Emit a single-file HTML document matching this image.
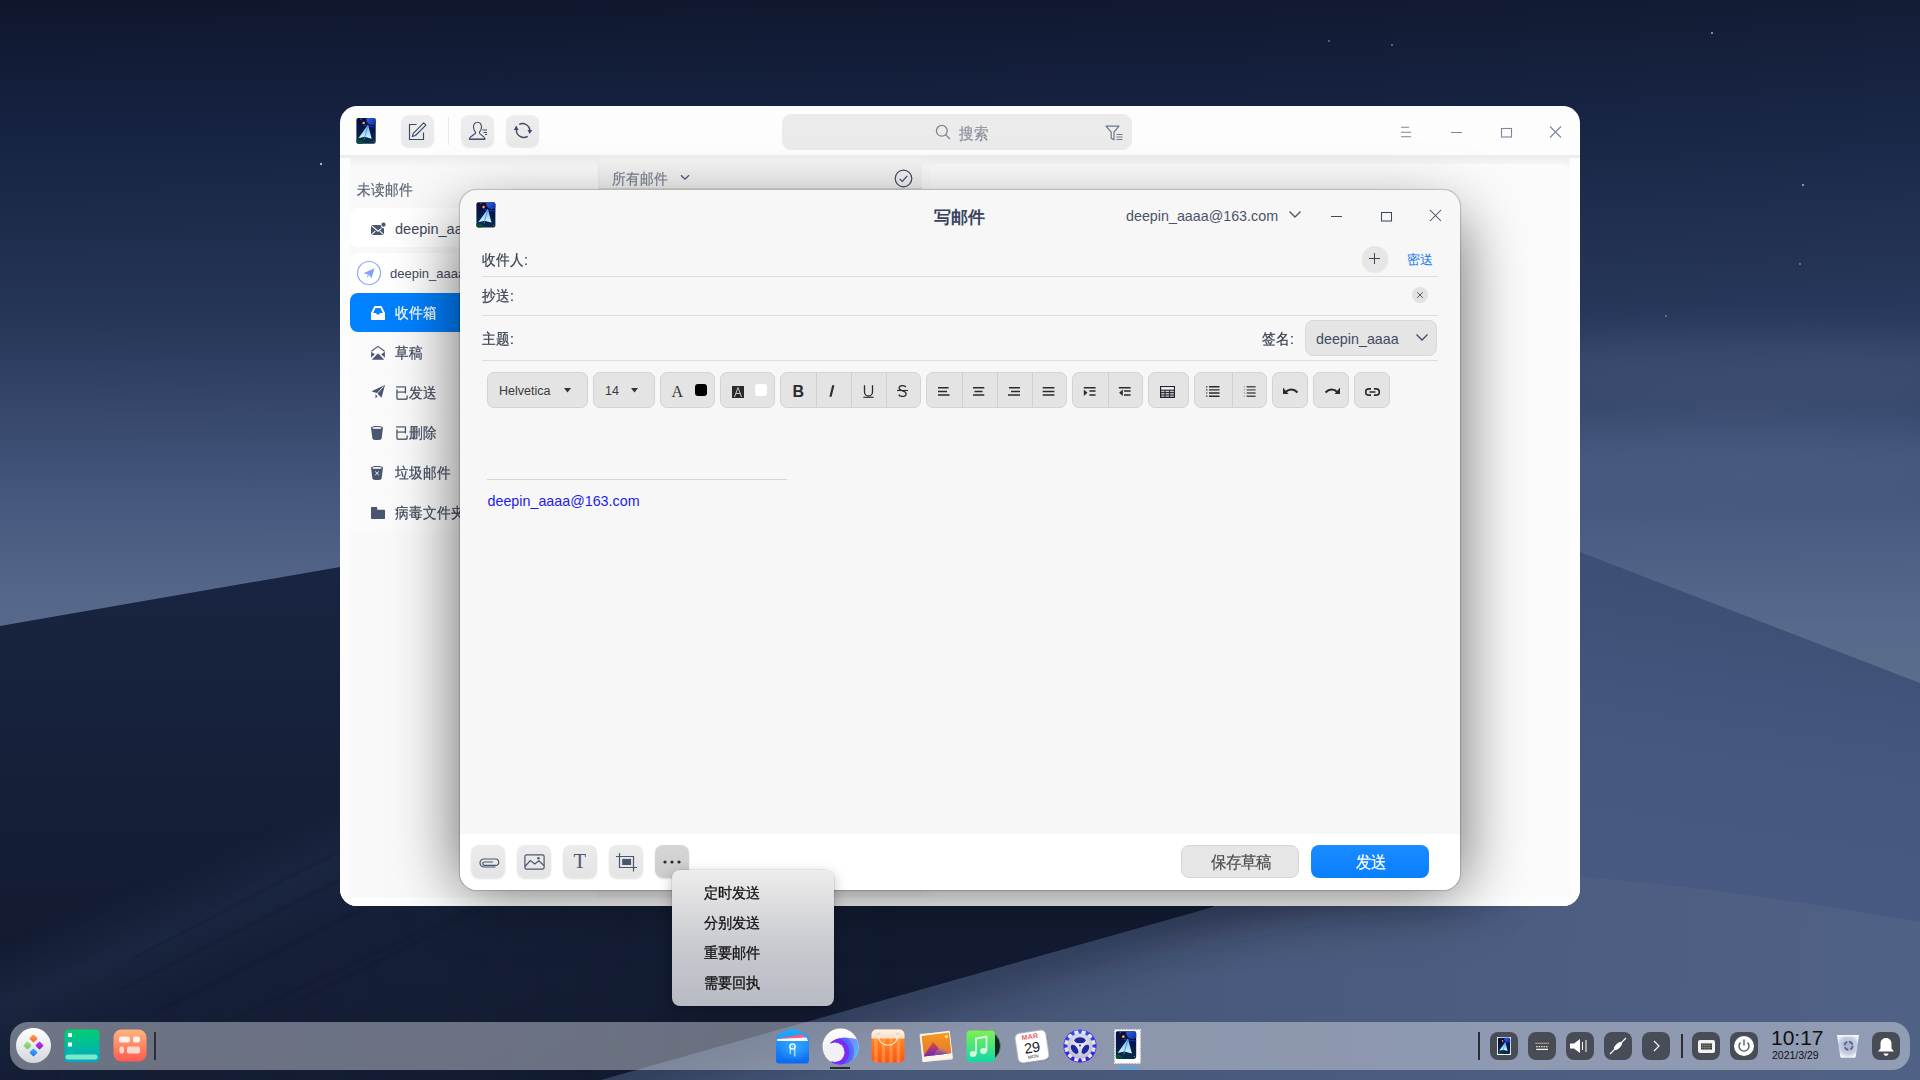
<!DOCTYPE html>
<html><head><meta charset="utf-8">
<style>
*{box-sizing:border-box;margin:0;padding:0}
html,body{width:1920px;height:1080px;overflow:hidden}
body{position:relative;font-family:"Liberation Sans",sans-serif;background:#1a2540}
.abs{position:absolute}
.c{transform:scaleY(1.1);transform-origin:0 0;-webkit-text-stroke:0.2px currentColor}
#bg{position:absolute;left:0;top:0}
/* main window */
#main{position:absolute;left:340px;top:106px;width:1240px;height:800px;border-radius:17px;background:#fdfdfd;overflow:hidden}
.tbtn{position:absolute;top:9.3px;width:33.3px;height:31.3px;border-radius:8px;background:linear-gradient(#eeeeee,#e8e8e8);box-shadow:0 1px 1.5px rgba(0,0,0,0.08)}
.ico{position:absolute}
/* compose */
#compose{position:absolute;left:460px;top:190px;width:1000px;height:700px;border-radius:17px;background:#f7f7f7;overflow:hidden;box-shadow:0 0 1px 0.5px rgba(0,0,0,0.18)}
.lbl{position:absolute;font-size:14px;color:#353e4e}
.sep{position:absolute;height:1px;background:#dedede}
.tb{position:absolute;top:182px;height:36px;border-radius:7px;background:#e4e4e4;border:1px solid #d3d3d3}
.tb .d{position:absolute;top:0;width:1px;height:34px;background:#d0d0d0}
.bb{position:absolute;top:655px;width:34px;height:33px;border-radius:8px;background:linear-gradient(#ececec,#e4e4e4);box-shadow:0 1px 2px rgba(0,0,0,0.12)}
#popup{position:absolute;left:672px;top:870px;width:162px;height:136px;border-radius:8px;background:linear-gradient(#ededed,#c9cacf 55%,#b8bac4);box-shadow:0 4px 14px rgba(0,0,0,0.25), 0 0 0 0.6px rgba(0,0,0,0.12)}
#popup div{position:absolute;left:32px;font-size:14px;color:#111;-webkit-text-stroke:0.3px #111;transform:scaleY(1.06);transform-origin:0 0}
/* dock */
#dock{position:absolute;left:10px;top:1022px;width:1900px;height:48px;border-radius:18px;background:rgba(248,250,255,0.39)}
.tray{position:absolute;top:10px;width:28px;height:28px;border-radius:8px;background:#474c57}
</style></head><body>
<svg width="0" height="0" style="position:absolute">
<defs>
<linearGradient id="mg" x1="0" y1="0" x2="0" y2="1"><stop offset="0" stop-color="#0c0c3e"/><stop offset="0.5" stop-color="#041a48"/><stop offset="1" stop-color="#06304a"/></linearGradient>
<linearGradient id="pl" x1="0" y1="0" x2="0" y2="1"><stop offset="0" stop-color="#6ab4f0"/><stop offset="1" stop-color="#d6f4ff"/></linearGradient>
<linearGradient id="pln" x1="0" y1="0" x2="1" y2="1"><stop offset="0" stop-color="#3a6ae0"/><stop offset="1" stop-color="#0a2aa0"/></linearGradient>
<clipPath id="icl"><rect x="1.4" y="1" width="19.3" height="25.7" rx="2"/></clipPath>
<symbol id="appicon" viewBox="0 0 22 28">
  <rect x="0" y="0" width="22" height="28" rx="3" fill="#fff"/>
  <rect x="1.4" y="1" width="19.3" height="25.7" rx="2" fill="url(#mg)"/>
  <g clip-path="url(#icl)">
    <circle cx="17" cy="2.5" r="5.6" fill="url(#pln)"/>
    <path d="M9 8.5C13 9 17 9.8 22 10.2" stroke="#1838d8" stroke-width="0.9" fill="none"/>
    <path d="M6.5 1L5.5 3" stroke="#10a0a0" stroke-width="0.8"/>
    <ellipse cx="4" cy="25" rx="4" ry="2.5" fill="#0a4a3a"/>
  </g>
  <circle cx="8.7" cy="6" r="1.3" fill="#ffa030"/>
  <circle cx="19" cy="24.5" r="0.5" fill="#e08030"/>
  <polygon points="13,7.7 3.4,21.3 9.5,19.8 16.7,21.7" fill="url(#pl)"/>
  <path d="M13 8.5L9 22.7" stroke="#3a90d0" stroke-width="0.8"/>
</symbol>
</defs></svg>
<svg id="bg" width="1920" height="1080" viewBox="0 0 1920 1080">
<defs>
<linearGradient id="sky" x1="0" y1="0" x2="0" y2="1080" gradientUnits="userSpaceOnUse">
<stop offset="0" stop-color="#0f172d"/><stop offset="0.111" stop-color="#152140"/><stop offset="0.296" stop-color="#263657"/><stop offset="0.444" stop-color="#42547a"/><stop offset="0.555" stop-color="#55688a"/><stop offset="0.65" stop-color="#5b6e8d"/>
</linearGradient>
<linearGradient id="dl" x1="0" y1="500" x2="0" y2="1080" gradientUnits="userSpaceOnUse">
<stop offset="0" stop-color="#1a2643"/><stop offset="0.5" stop-color="#151f38"/><stop offset="1" stop-color="#10182c"/>
</linearGradient>
<linearGradient id="dr" x1="1650" y1="560" x2="1600" y2="900" gradientUnits="userSpaceOnUse">
<stop offset="0" stop-color="#3d4e74"/><stop offset="0.5" stop-color="#45577f"/><stop offset="1" stop-color="#485a82"/>
</linearGradient>
<linearGradient id="fg" x1="800" y1="950" x2="1900" y2="1000" gradientUnits="userSpaceOnUse">
<stop offset="0" stop-color="#455575"/><stop offset="1" stop-color="#506186"/>
</linearGradient>
<filter id="soft" x="-5%" y="-5%" width="110%" height="110%"><feGaussianBlur stdDeviation="2"/></filter>
<filter id="soft2" x="-10%" y="-10%" width="120%" height="120%"><feGaussianBlur stdDeviation="14"/></filter>
</defs>
<rect width="1920" height="1080" fill="url(#sky)"/>
<defs><linearGradient id="skyh" x1="0" y1="0" x2="1920" y2="0" gradientUnits="userSpaceOnUse"><stop offset="0" stop-color="#3a5080" stop-opacity="0"/><stop offset="0.6" stop-color="#3a5080" stop-opacity="0.03"/><stop offset="1" stop-color="#4a6090" stop-opacity="0.08"/></linearGradient></defs>
<rect width="1920" height="620" fill="url(#skyh)"/>
<defs><filter id="cl" x="-50%" y="-50%" width="200%" height="200%"><feGaussianBlur stdDeviation="18"/></filter></defs>
<g filter="url(#cl)" opacity="0.13"><ellipse cx="1760" cy="365" rx="280" ry="34" fill="#7a8cb0"/><ellipse cx="1720" cy="455" rx="260" ry="34" fill="#8090b0"/></g>
<g fill="#cfd6e6" opacity="0.8"><circle cx="1712" cy="33" r="1"/><circle cx="1803" cy="185" r="1"/><circle cx="1800" cy="264" r="0.8"/><circle cx="1666" cy="316" r="0.8"/><circle cx="321" cy="164" r="1.2"/><circle cx="1329" cy="41" r="0.8"/><circle cx="1392" cy="45" r="0.8"/></g>
<g>
<polygon points="0,626 1222,414 1920,683 1920,1100 0,1100" fill="url(#dr)"/>
<polygon points="-20,629.5 1222,414 1300,870 760,1100 -20,1100" fill="url(#dl)"/>
<defs><linearGradient id="st" x1="170" y1="871" x2="215" y2="975" gradientUnits="userSpaceOnUse"><stop offset="0" stop-color="#2a3758" stop-opacity="0"/><stop offset="0.5" stop-color="#2a3758" stop-opacity="0.4"/><stop offset="1" stop-color="#1e2a48" stop-opacity="0.35"/></linearGradient>
<linearGradient id="stm" x1="0" y1="0" x2="900" y2="0" gradientUnits="userSpaceOnUse"><stop offset="0" stop-color="#fff"/><stop offset="0.5" stop-color="#fff" stop-opacity="0.7"/><stop offset="1" stop-color="#fff" stop-opacity="0"/></linearGradient>
<mask id="stmask" maskUnits="userSpaceOnUse" x="0" y="0" width="1920" height="1080"><rect width="1920" height="1080" fill="url(#stm)"/></mask>
<filter id="bl3"><feGaussianBlur stdDeviation="3"/></filter></defs>
<polygon points="-20,945 360,780 760,640 1300,600 1300,1080 -20,1080" fill="url(#st)" mask="url(#stmask)"/>
<g stroke="#0e1528" stroke-width="4" opacity="0.16">
<path d="M120,990 L420,840"/><path d="M160,1010 L520,830"/><path d="M230,1020 L600,850"/><path d="M130,960 L380,830"/><path d="M300,1000 L700,800"/>
</g>
<path d="M580,1086 L1217,906 C1300,880 1450,868 1580,877 C1700,886 1820,905 1940,925 L1940,1100 L580,1100 Z" fill="url(#fg)"/>
<defs><linearGradient id="fgs" x1="1000" y1="967" x2="1030" y2="1075" gradientUnits="userSpaceOnUse"><stop offset="0" stop-color="#18213a" stop-opacity="0.55"/><stop offset="1" stop-color="#18213a" stop-opacity="0"/></linearGradient>
<linearGradient id="fgs2" x1="1260" y1="880" x2="1290" y2="990" gradientUnits="userSpaceOnUse"><stop offset="0" stop-color="#18213a" stop-opacity="0.4"/><stop offset="1" stop-color="#18213a" stop-opacity="0"/></linearGradient></defs>
<clipPath id="fgclip"><path d="M580,1086 L1217,906 C1300,880 1450,868 1580,877 C1700,886 1820,905 1940,925 L1940,1100 L580,1100 Z"/></clipPath>
<filter id="bl20" x="-20%" y="-50%" width="140%" height="200%"><feGaussianBlur stdDeviation="22"/></filter>
<g clip-path="url(#fgclip)"><path d="M560,1092 L1217,906 C1300,880 1400,870 1500,872" stroke="#151d35" stroke-width="40" fill="none" opacity="0.55" filter="url(#bl20)"/></g>
</g>
</svg>

<div id="main">
  <!-- titlebar -->
  <svg class="ico" style="left:15.2px;top:10.5px" width="22" height="28" viewBox="0 0 22 28"><use href="#appicon"/></svg>
  <div class="tbtn" style="left:61px"></div>
  <svg class="ico" style="left:68px;top:16px" width="20" height="20" viewBox="0 0 20 20" fill="none" stroke="#3c4a68" stroke-width="1.15">
    <path d="M8.5 2.5H1.5V17.5H15.5V10.5"/><path d="M4.3 14.5L5.3 11.3 15.7 0.9 17.9 3.1 7.5 13.5Z" stroke-linejoin="round"/>
  </svg>
  <div class="abs" style="left:108px;top:11px;width:1px;height:28px;background:#e9e9ee"></div>
  <div class="tbtn" style="left:121px"></div>
  <svg class="ico" style="left:128px;top:15px" width="21" height="20" viewBox="0 0 21 20" fill="none" stroke="#3c4a68" stroke-width="1.1">
    <path d="M9.5 1.2C6.9 1.2 5.5 3.3 5.5 6C5.5 8 6.3 9.8 7.5 11V12.3L2.3 16.2C1.6 16.8 1.3 17.5 1.3 18.3H17C17 17.5 16.7 16.8 16 16.2L11.5 12.3V11C12.7 9.8 13.5 8 13.5 6C13.5 3.3 12.1 1.2 9.5 1.2Z"/>
    <path d="M1.3 18.3H17" stroke-width="1.6" opacity="0.8"/>
    <path d="M14.5 9H19M15.5 11.5H19M17 13.5H19" stroke-width="1"/>
  </svg>
  <div class="tbtn" style="left:166px"></div>
  <svg class="ico" style="left:172px;top:14px" width="22" height="22" viewBox="0 0 22 22" fill="none" stroke="#3c4a68" stroke-width="1.4">
    <path d="M7.2 4.4A7.4 7.4 0 0 1 17.9 10.2"/><path d="M15.7 16.3A7.4 7.4 0 0 1 4.4 9.6"/>
    <path d="M15.5 9.9L20.2 9.9 17.7 14Z" fill="#3c4a68" stroke="none"/><path d="M1.8 10L6.6 10 4.3 5.6Z" fill="#3c4a68" stroke="none"/>
  </svg>
  <!-- search -->
  <div class="abs" style="left:442px;top:8px;width:350px;height:36px;border-radius:9px;background:#ebebeb"></div>
  <svg class="ico" style="left:595px;top:18px" width="17" height="17" viewBox="0 0 17 17" fill="none" stroke="#7d8594" stroke-width="1.3">
    <circle cx="6.8" cy="6.8" r="5.4"/><path d="M10.7 10.7L15 15"/>
  </svg>
  <div class="abs c" style="left:619px;top:17.5px;font-size:14.5px;color:#8b919c">搜索</div>
  <svg class="ico" style="left:765px;top:19px" width="20" height="17" viewBox="0 0 20 17" fill="none" stroke="#6e7789" stroke-width="1.2">
    <path d="M1 1.2h13l-5 6v7.5l-2.8-1.5V7.2z" stroke-linejoin="round"/><path d="M11.5 9.5h6M11.5 12h6M11.5 14.5h6"/>
  </svg>
  <!-- window controls -->
  <svg class="ico" style="left:1058px;top:17px" width="180" height="18" viewBox="0 0 180 18" fill="none" stroke="#7c879c" stroke-width="1.1">
    <path d="M3 4.3h8M3 9.3h10M3 13.8h10"/>
    <path d="M53 9.5h11"/>
    <rect x="103.5" y="5.5" width="10" height="8.5"/>
    <path d="M152 3.5l11 11M163 3.5l-11 11"/>
  </svg>
  <!-- below titlebar -->
  <div class="abs" style="left:0;top:49px;width:1240px;height:3px;background:#eeeeee"></div>
  <div class="abs" style="left:0;top:52px;width:1240px;height:748px;background:#f9f9f9"></div>
  <div class="abs" style="left:0;top:52px;width:1240px;height:8px;background:linear-gradient(#f0f0f0,#f7f7f7)"></div>
  <!-- sidebar -->
  <div class="abs" style="left:0;top:52px;width:10px;height:748px;background:#fdfdfd"></div>
  <div class="abs" style="left:0;top:791px;width:1240px;height:9px;background:#fdfdfd"></div>
  <div class="abs" style="left:1230px;top:52px;width:10px;height:748px;background:#fdfdfd"></div>
  <div class="abs" style="left:10px;top:62px;width:238px;height:364px;background:#f9f9f9"></div>
  <div class="abs c" style="left:17px;top:74.7px;font-size:14px;color:#5b6474">未读邮件</div>
  <div class="abs" style="left:10px;top:102px;width:238px;height:39px;border-radius:8px;background:#fff"></div>
  <svg class="ico" style="left:30px;top:116px" width="16" height="13" viewBox="0 0 16 13">
    <path d="M1 3.5c0-.3.2-.5.5-.5h9.2a3 3 0 0 0 3.3 3.2V12.5c0 .3-.2.5-.5.5H1.5c-.3 0-.5-.2-.5-.5z" fill="#4a5570"/>
    <path d="M1.2 3.3L8 9.2 11.5 6.3M1.2 12.8L5.3 9.2M13.8 12.8L9.8 9.2" stroke="#fff" stroke-width="1.1" fill="none"/>
    <circle cx="13.5" cy="2.7" r="2.1" fill="#4a5570"/>
  </svg>
  <div class="abs" style="left:55px;top:115px;font-size:14.5px;color:#3f4a5e">deepin_aaaa@163.com</div>
  <div class="abs" style="left:10px;top:147px;width:238px;height:40px;border-radius:8px;background:#fff"></div>
  <svg class="ico" style="left:16px;top:154px" width="26" height="26" viewBox="0 0 26 26">
    <circle cx="13" cy="13" r="11.5" fill="none" stroke="#8aaaf4" stroke-width="1.2"/>
    <path d="M7.5 13.2L18.5 8.2 15.5 18.3 13 14.8z" fill="#7fa2f0"/><path d="M13 14.8l-1.3 3.3 -0.6-2.6z" fill="#7fa2f0"/>
  </svg>
  <div class="abs" style="left:50px;top:160px;font-size:13px;color:#3f4a5e">deepin_aaaa@163.com</div>
  <!-- selected -->
  <div class="abs" style="left:10px;top:187px;width:238px;height:39px;border-radius:8px;background:#0081ff"></div>
  <svg class="ico" style="left:31px;top:200px" width="14" height="14" viewBox="0 0 14 14">
    <path d="M3.5 0h7l3.5 7v6.5c0 .3-.2.5-.5.5H.5c-.3 0-.5-.2-.5-.5V7z" fill="#fff"/>
    <path d="M4.5 2h5l2.3 5H8.8a1.8 1.8 0 0 1-3.6 0H2.2z" fill="#0081ff"/>
  </svg>
  <div class="abs c" style="left:55px;top:197.7px;font-size:14px;color:#fff">收件箱</div>
  <div class="abs" style="left:10px;top:228px;width:238px;height:38px;border-radius:8px;background:#fbfbfb"></div>
  <svg class="ico" style="left:28px;top:236px" width="20" height="20" viewBox="0 0 20 20" fill="#4a5570">
    <path d="M3.4 9.3L10 4.4 16.6 9.3" stroke="#4a5570" stroke-width="1.15" fill="none" stroke-linejoin="round"/>
    <path d="M3.1 9.7V15.8L6.8 12.3Z"/><path d="M16.9 9.7V15.8L13.2 12.3Z"/><path d="M3.8 17.7L10 11.2 16.2 17.7Z"/>
  </svg>
  <div class="abs c" style="left:55px;top:237.7px;font-size:14px;color:#3f4a5e">草稿</div>
  <div class="abs" style="left:10px;top:267px;width:238px;height:39px;border-radius:8px;background:#fbfbfb"></div>
  <svg class="ico" style="left:31px;top:279px" width="14" height="14" viewBox="0 0 14 14">
    <path d="M0.5 6.3L14 0 10.5 12.8 6.2 8.3z" fill="#4a5570"/>
    <path d="M4.5 9.2V13.5L6.5 11.3z" fill="#4a5570"/>
    <path d="M5.8 8.6L12.5 1.5" stroke="#fff" stroke-width="0.9"/>
  </svg>
  <div class="abs c" style="left:55px;top:277.7px;font-size:14px;color:#3f4a5e">已发送</div>
  <div class="abs" style="left:10px;top:307px;width:238px;height:39px;border-radius:8px;background:#fbfbfb"></div>
  <svg class="ico" style="left:31px;top:320px" width="12" height="14" viewBox="0 0 12 14">
    <path d="M0 1.8C0 .6 3 0 6 0s6 .6 6 1.8L10.6 12.5c-.2 1-2.2 1.5-4.6 1.5s-4.4-.5-4.6-1.5z" fill="#4a5570"/>
    <ellipse cx="6" cy="1.9" rx="4.6" ry="0.9" fill="#fff"/>
  </svg>
  <div class="abs c" style="left:55px;top:317.7px;font-size:14px;color:#3f4a5e">已删除</div>
  <div class="abs" style="left:10px;top:347px;width:238px;height:39px;border-radius:8px;background:#fbfbfb"></div>
  <svg class="ico" style="left:31px;top:360px" width="12" height="14" viewBox="0 0 12 14">
    <path d="M0 1.8C0 .6 3 0 6 0s6 .6 6 1.8L10.6 12.5c-.2 1-2.2 1.5-4.6 1.5s-4.4-.5-4.6-1.5z" fill="#4a5570"/>
    <ellipse cx="6" cy="1.9" rx="4.6" ry="0.9" fill="#fff"/>
    <path d="M4.2 5.5l3.6 3.6M7.8 5.5l-3.6 3.6" stroke="#fff" stroke-width="0.9"/>
  </svg>
  <div class="abs c" style="left:55px;top:357.7px;font-size:14px;color:#3f4a5e">垃圾邮件</div>
  <div class="abs" style="left:10px;top:387px;width:238px;height:39px;border-radius:8px;background:#fbfbfb"></div>
  <svg class="ico" style="left:31px;top:401px" width="14" height="12" viewBox="0 0 14 12">
    <path d="M0 .8C0 .3.3 0 .8 0h4.7c.4 0 .7.3.7.7v1.5c0 .3.2.5.5.5h6.5c.5 0 .8.3.8.8v7.7c0 .5-.3.8-.8.8H.8c-.5 0-.8-.3-.8-.8z" fill="#4a5570"/>
  </svg>
  <div class="abs c" style="left:55px;top:397.7px;font-size:14px;color:#3f4a5e">病毒文件夹</div>
  <!-- list column header -->
  <div class="abs" style="left:258px;top:52px;width:324px;height:740px;background:#f6f6f6;border-left:1px solid #ececec"></div>
  <div class="abs" style="left:258px;top:52px;width:324px;height:31px;background:linear-gradient(#f4f4f4,#efefef);border-bottom:1px solid #d8d8d8;border-left:1px solid #ececec"></div>
  <div class="abs c" style="left:271.5px;top:63.5px;font-size:14px;color:#7b8290">所有邮件</div>
  <svg class="ico" style="left:340px;top:68px" width="10" height="7" viewBox="0 0 10 7" fill="none" stroke="#4a5570" stroke-width="1.3"><path d="M1 1.2l4 4 4-4"/></svg>
  <svg class="ico" style="left:554px;top:63px" width="19" height="19" viewBox="0 0 19 19" fill="none" stroke="#3f4a66" stroke-width="1.2">
    <circle cx="9.5" cy="9.5" r="8.3"/><path d="M5.6 9.8l2.7 2.7 5-5.6"/>
  </svg>
  <!-- reading pane -->
  <div class="abs" style="left:590px;top:58px;width:640px;height:733px;border-radius:9px;background:#fbfbfb"></div>
</div>

<div class="abs" style="left:462px;top:220px;width:996px;height:668px;border-radius:20px;box-shadow:0 0 64px 4px rgba(0,0,0,0.58)"></div>
<div id="compose">
  <svg class="ico" style="left:15.3px;top:11px" width="21.7" height="28" viewBox="0 0 22 28"><use href="#appicon"/></svg>
  <div class="abs" style="left:474px;top:15.5px;font-size:17px;font-weight:bold;color:#38445e">写邮件</div>
  <div class="abs" style="left:666px;top:18px;font-size:14.3px;color:#4a5468">deepin_aaaa@163.com</div>
  <svg class="ico" style="left:828px;top:20px" width="14" height="9" viewBox="0 0 14 9" fill="none" stroke="#4a5468" stroke-width="1.3"><path d="M1.5 1.5l5.5 5.5 5.5-5.5"/></svg>
  <svg class="ico" style="left:868px;top:17px" width="120" height="16" viewBox="0 0 120 16" fill="none" stroke="#3f4a62" stroke-width="1.05">
    <path d="M3 9.5h11"/><rect x="53.5" y="5.5" width="10" height="8.5"/><path d="M102 3l11 11M113 3l-11 11"/>
  </svg>
  <!-- fields -->
  <div class="lbl c" style="left:22px;top:60.5px">收件人:</div>
  <div class="abs" style="left:902px;top:56px;width:26px;height:26px;border-radius:13px;background:#e6e6e6;box-shadow:0 1px 2px rgba(0,0,0,0.08)"></div>
  <svg class="ico" style="left:909px;top:63px" width="12" height="12" viewBox="0 0 12 12" stroke="#3c4658" stroke-width="1"><path d="M5.5 0v11M0 5.5h11"/></svg>
  <div class="abs" style="left:947px;top:61px;font-size:13px;color:#1478f2">密送</div>
  <div class="sep" style="left:22px;top:86px;width:956px"></div>
  <div class="lbl c" style="left:22px;top:97px">抄送:</div>
  <div class="abs" style="left:952px;top:97px;width:16px;height:16px;border-radius:8px;background:#e2e2e2"></div>
  <svg class="ico" style="left:956px;top:101px" width="8" height="8" viewBox="0 0 8 8" stroke="#4a5468" stroke-width="0.95"><path d="M1.2 1.2l5.6 5.6M6.8 1.2l-5.6 5.6"/></svg>
  <div class="sep" style="left:22px;top:125px;width:956px"></div>
  <div class="lbl c" style="left:22px;top:140px">主题:</div>
  <div class="lbl c" style="left:802px;top:139.5px">签名:</div>
  <div class="abs" style="left:845px;top:130px;width:132px;height:36px;border-radius:8px;background:#e5e5e5;border:1px solid #d9d9d9"></div>
  <div class="abs" style="left:856px;top:141px;font-size:14.3px;color:#3f4a62">deepin_aaaa</div>
  <svg class="ico" style="left:955px;top:143px" width="14" height="9" viewBox="0 0 14 9" fill="none" stroke="#3f4a62" stroke-width="1.3"><path d="M1.5 1.5l5.5 5.5 5.5-5.5"/></svg>
  <div class="sep" style="left:22px;top:170px;width:956px"></div>
  <!-- toolbar -->
  <div class="tb" style="left:27px;width:101px"></div>
  <div class="abs" style="left:39px;top:193.5px;font-size:12.5px;color:#3a3a3a">Helvetica</div>
  <svg class="ico" style="left:104px;top:198px" width="7" height="5" viewBox="0 0 7 5"><path d="M0 0h7L3.5 4.5z" fill="#333"/></svg>
  <div class="tb" style="left:133px;width:62px"></div>
  <div class="abs" style="left:145px;top:193.5px;font-size:12.5px;color:#3a3a3a">14</div>
  <svg class="ico" style="left:171px;top:198px" width="7" height="5" viewBox="0 0 7 5"><path d="M0 0h7L3.5 4.5z" fill="#333"/></svg>
  <div class="tb" style="left:200px;width:55px"></div>
  <div class="abs" style="left:211.5px;top:192.5px;font-size:16px;line-height:18px;font-family:'Liberation Serif',serif;color:#333">A</div>
  <div class="abs" style="left:235px;top:194px;width:12px;height:12px;border-radius:3px;background:#000"></div>
  <div class="tb" style="left:260px;width:55px"></div>
  <svg class="ico" style="left:271.5px;top:195.5px" width="12" height="12" viewBox="0 0 12 12"><rect width="12" height="12" fill="#2a2a2a"/><path d="M2.5 11L6 1.5 9.5 11M4 7.5h4" stroke="#d8d8d8" stroke-width="0.9" fill="none"/></svg>
  <div class="abs" style="left:295px;top:194px;width:12px;height:12px;border-radius:3px;background:#fff"></div>
  <div class="tb" style="left:320px;width:141px"><div class="d" style="left:35px"></div><div class="d" style="left:70px"></div><div class="d" style="left:105px"></div></div>
  <div class="abs" style="left:332.5px;top:192.5px;font-size:16px;line-height:18px;font-weight:bold;color:#2b2b2b">B</div>
  <svg class="ico" style="left:369px;top:195px" width="6" height="12" viewBox="0 0 6 12"><path d="M3.2 0.3h2.2L2.6 11.7H0.4z" fill="#2b2b2b"/></svg>
  <svg class="ico" style="left:402.5px;top:195px" width="11" height="13" viewBox="0 0 11 13" fill="none" stroke="#2b2b2b" stroke-width="1.3"><path d="M1.5 0.3V7a4 4 0 0 0 8 0V0.3"/><path d="M0.3 12.3H10.6" stroke-width="1.1"/></svg>
  <svg class="ico" style="left:437px;top:195px" width="11" height="12" viewBox="0 0 11 12" fill="none" stroke="#2b2b2b" stroke-width="1.3"><path d="M8.8 2.2C8 1 6.8 0.6 5.4 0.6 3.5 0.6 2.1 1.6 2.1 3.1c0 3.3 7 2.4 7 5.6 0 1.7-1.5 2.7-3.6 2.7-1.6 0-3-.6-3.8-1.8"/><path d="M0 5.5H11" stroke-width="1.1"/></svg>
  <div class="tb" style="left:466px;width:141px"><div class="d" style="left:35px"></div><div class="d" style="left:70px"></div><div class="d" style="left:105px"></div></div>
  <svg class="ico" style="left:477px;top:196px" width="130" height="11" viewBox="0 0 130 11" stroke="#2b2b2b" stroke-width="1.5">
    <path d="M1 1.8h10.6M1 5.5h9M1 9h11.5"/>
    <path d="M36 1.8h11.3M37.5 5.5h8M36 9h11.3"/>
    <path d="M72 1.8h11M74 5.5h9M71 9h12"/>
    <path d="M105.7 1.8h11.7M105.7 5.5h11.7M105.7 9h11.7"/>
  </svg>
  <div class="tb" style="left:612px;width:71px"><div class="d" style="left:35px"></div></div>
  <svg class="ico" style="left:623px;top:196px" width="60" height="12" viewBox="0 0 60 12" stroke="#2b2b2b" stroke-width="1.5">
    <path d="M0.8 1.7h11.8M6.4 5.1h6.2M6.4 8.9h6.2"/><path d="M0.8 3.5v6.5l3.7-3.2z" fill="#2b2b2b" stroke="none"/>
    <path d="M35.8 1.7h11.8M41 5.1h6.6M41 8.9h6.6"/><path d="M39.8 3.5v6.5l-3.7-3.2z" fill="#2b2b2b" stroke="none"/>
  </svg>
  <div class="tb" style="left:688px;width:41px"></div>
  <svg class="ico" style="left:699.5px;top:195.5px" width="15" height="12" viewBox="0 0 15 12">
    <rect x="0.6" y="0.6" width="13.8" height="10.8" fill="#c8c8c8" stroke="#202030" stroke-width="1.2"/>
    <rect x="1.2" y="1.2" width="12.6" height="2.3" fill="#f4f4f4"/>
    <path d="M1 4.2h13M1 6.6h13M1 9h13" stroke="#202030" stroke-width="1"/><path d="M5 4v7M9.6 4v7" stroke="#202030" stroke-width="1"/>
  </svg>
  <div class="tb" style="left:734px;width:73px"><div class="d" style="left:37px"></div></div>
  <svg class="ico" style="left:745.5px;top:195.5px" width="60" height="12" viewBox="0 0 60 12" stroke="#2b2b2b">
    <path d="M3 0.8h10.5M3 3.9h10.5M3 7h10.5M3 10.2h10.5" stroke-width="1.4"/><path d="M0 0.8h1.4M0 3.9h1.4M0 7h1.4M0 10.2h1.4" stroke-width="1.2"/>
    <path d="M40.6 0.8h9M40.6 3.9h9M40.6 7h9M40.6 10.2h9" stroke-width="1.4" stroke="#505050"/><path d="M37.8 0.8h1M37.8 3.9h1M37.8 7h1M37.8 10.2h1" stroke-width="1" stroke="#777"/>
  </svg>
  <div class="tb" style="left:812px;width:36px"></div>
  <svg class="ico" style="left:823px;top:197px" width="15" height="8" viewBox="0 0 15 8"><path d="M0 0.5v6.5h5.5z" fill="#2b2b2b"/><path d="M2.5 5.2c3.3-3.6 8.5-3.8 12 .3" stroke="#2b2b2b" stroke-width="2" fill="none"/></svg>
  <div class="tb" style="left:853px;width:36px"></div>
  <svg class="ico" style="left:864.5px;top:197px" width="15" height="8" viewBox="0 0 15 8"><path d="M15 0.5v6.5H9.5z" fill="#2b2b2b"/><path d="M12.5 5.2c-3.3-3.6-8.5-3.8-12 .3" stroke="#2b2b2b" stroke-width="2" fill="none"/></svg>
  <div class="tb" style="left:894px;width:36px"></div>
  <svg class="ico" style="left:905px;top:197.5px" width="15" height="8" viewBox="0 0 15 8" fill="none" stroke="#2b2b2b" stroke-width="1.6">
    <path d="M6 0.9H3.8a3.1 3.1 0 0 0 0 6.2H6M9 0.9h2.2a3.1 3.1 0 0 1 0 6.2H9M4.5 4h6"/>
  </svg>
  <!-- body -->
  <div class="abs" style="left:27px;top:289px;width:300px;height:1px;background:#d6d6d6"></div>
  <div class="abs" style="left:27.5px;top:303px;font-size:14.3px;color:#1c1ce8">deepin_aaaa@163.com</div>
  <!-- bottom bar -->
  <div class="abs" style="left:0;top:644px;width:1000px;height:56px;background:#fff"></div>
  <div class="bb" style="left:11px"></div>
  <div class="bb" style="left:57px"></div>
  <div class="bb" style="left:103px"></div>
  <div class="bb" style="left:149px"></div>
  <div class="bb" style="left:195px;background:linear-gradient(#d6d6d6,#cccccc)"></div>
  <svg class="ico" style="left:18.5px;top:667.5px" width="22" height="11" viewBox="0 0 22 11" fill="none" stroke="#4a5670" stroke-width="1.2">
    <path d="M16.5 9H5A4 4 0 0 1 5 1H16.5A3.2 3.2 0 0 1 16.5 7.4H5.5A1.7 1.7 0 0 1 5.5 4H14"/>
  </svg>
  <svg class="ico" style="left:63.5px;top:663.5px" width="21" height="16" viewBox="0 0 21 16" fill="none" stroke="#4a5670" stroke-width="1.2">
    <rect x="0.9" y="0.9" width="19.2" height="14.2" rx="1.5"/><path d="M1 12.5L6.3 6.5 10.8 10 14.8 6.7 20 11.5"/><circle cx="14.5" cy="4.3" r="1.2" fill="#4a5670" stroke="none"/>
  </svg>
  <div class="abs" style="left:113.5px;top:659px;font-size:20.5px;line-height:24px;font-family:'Liberation Serif',serif;color:#4a5670">T</div>
  <svg class="ico" style="left:155.5px;top:662.5px" width="22" height="19" viewBox="0 0 22 19" fill="none" stroke="#4a5670" stroke-width="1.2">
    <path d="M3.5 0V14.5H21M0 3.5H17.5V18.5"/><rect x="6.2" y="5.9" width="8.9" height="6.1" fill="#4a5670" stroke="none"/>
  </svg>
  <svg class="ico" style="left:202px;top:670px" width="20" height="4" viewBox="0 0 20 4" fill="#222b3a"><circle cx="3" cy="2" r="1.6"/><circle cx="10" cy="2" r="1.6"/><circle cx="17" cy="2" r="1.6"/></svg>
  <div class="abs" style="left:721px;top:655px;width:118px;height:33px;border-radius:8px;background:#e6e6e6;border:1px solid #d5d5d5"></div>
  <div class="abs c" style="left:751px;top:663.2px;font-size:15px;color:#505050">保存草稿</div>
  <div class="abs" style="left:851px;top:655px;width:118px;height:33px;border-radius:8px;background:linear-gradient(#1a8cff,#0a7fff)"></div>
  <div class="abs c" style="left:896px;top:663.2px;font-size:15px;color:#fff">发送</div>
</div>

<div id="popup">
  <div style="top:14px">定时发送</div>
  <div style="top:44px">分别发送</div>
  <div style="top:74px">重要邮件</div>
  <div style="top:104px">需要回执</div>
</div>

<div id="dock">
  <!-- launcher -->
  <svg class="ico" style="left:5px;top:5px" width="37" height="37" viewBox="0 0 37 37">
    <defs><linearGradient id="lg1" x1="0" y1="0" x2="0" y2="1"><stop offset="0" stop-color="#ffffff"/><stop offset="1" stop-color="#d4d8dc"/></linearGradient>
    <linearGradient id="dg1" x1="0" y1="0" x2="1" y2="1"><stop offset="0" stop-color="#ffa24a"/><stop offset="1" stop-color="#ff5a3a"/></linearGradient>
    <linearGradient id="dg2" x1="0" y1="0" x2="1" y2="1"><stop offset="0" stop-color="#a8e070"/><stop offset="1" stop-color="#70c878"/></linearGradient>
    <linearGradient id="dg3" x1="0" y1="0" x2="1" y2="1"><stop offset="0" stop-color="#c040f0"/><stop offset="1" stop-color="#9010d0"/></linearGradient>
    <linearGradient id="dg4" x1="0" y1="0" x2="1" y2="1"><stop offset="0" stop-color="#40b0ff"/><stop offset="1" stop-color="#2070f0"/></linearGradient></defs>
    <circle cx="18.5" cy="18.5" r="17.5" fill="url(#lg1)"/>
    <rect x="15.5" y="8.5" width="6" height="6" rx="1" transform="rotate(45 18.5 11.5)" fill="url(#dg1)"/>
    <rect x="9.5" y="15.5" width="6" height="6" rx="1" transform="rotate(45 12.5 18.5)" fill="url(#dg2)"/>
    <rect x="21.5" y="15.5" width="6" height="6" rx="1" transform="rotate(45 24.5 18.5)" fill="url(#dg3)"/>
    <rect x="15.5" y="22.5" width="6" height="6" rx="1" transform="rotate(45 18.5 25.5)" fill="url(#dg4)"/>
  </svg>
  <!-- green app -->
  <svg class="ico" style="left:54px;top:7px" width="36" height="34" viewBox="0 0 36 34">
    <defs><linearGradient id="ga" x1="0" y1="0" x2="0" y2="1"><stop offset="0" stop-color="#00d070"/><stop offset="1" stop-color="#00a8c8"/></linearGradient></defs>
    <rect x="0.5" y="0.5" width="35" height="32.5" rx="4" fill="url(#ga)"/>
    <rect x="4" y="4" width="4" height="4" fill="#fff"/><rect x="4" y="13.5" width="4" height="4" fill="#fff"/>
    <rect x="1.5" y="25.5" width="32" height="5" rx="2.5" fill="#7ee8c8"/>
  </svg>
  <!-- orange app -->
  <svg class="ico" style="left:103px;top:7px" width="34" height="33" viewBox="0 0 34 33">
    <defs><linearGradient id="gb" x1="0" y1="0" x2="0" y2="1"><stop offset="0" stop-color="#ffb47a"/><stop offset="1" stop-color="#ff5a50"/></linearGradient></defs>
    <rect x="0.5" y="0.5" width="33" height="32" rx="8" fill="url(#gb)"/>
    <rect x="6" y="7.5" width="11" height="6" rx="2" fill="#fff" opacity="0.88"/><rect x="20" y="7.5" width="7" height="6" rx="2" fill="#fff" opacity="0.88"/>
    <rect x="6.5" y="17.5" width="4.5" height="7" rx="2" fill="#fff" opacity="0.7"/><rect x="14" y="17.5" width="13" height="7" rx="2" fill="#fff" opacity="0.7"/>
  </svg>
  <div class="abs" style="left:144px;top:10px;width:2px;height:28px;background:#2b2e36"></div>
  <!-- center icons -->
  <svg class="ico" style="left:764.5px;top:5.5px" width="35" height="36" viewBox="0 0 35 36">
    <defs><linearGradient id="gc" x1="0" y1="0" x2="0" y2="1"><stop offset="0" stop-color="#1ab0ff"/><stop offset="0.4" stop-color="#1e90ff"/><stop offset="1" stop-color="#0a68f0"/></linearGradient>
    <radialGradient id="gcr" cx="0.55" cy="0.45" r="0.5"><stop offset="0" stop-color="#40c0ff" stop-opacity="0.6"/><stop offset="1" stop-color="#40c0ff" stop-opacity="0"/></radialGradient></defs>
    <path d="M1 12C1 8 3 6.5 6 5L14 1.5C16.3.5 18.7.5 21 1.5L29 5C32 6.5 34 8 34 12V32.5C34 34.2 32.7 35.5 31 35.5H4C2.3 35.5 1 34.2 1 32.5Z" fill="url(#gc)"/>
    <rect x="1" y="8" width="33" height="27" fill="url(#gcr)"/>
    <path d="M2.5 10.5L28 6.2 30.5 10.2Z" fill="#ff5a78"/><path d="M2.2 11L31.5 9.6 33 13H2Z" fill="#fff"/>
    <circle cx="17.5" cy="18.5" r="2.6" fill="none" stroke="#fff" stroke-width="1.4"/><circle cx="17.5" cy="18.5" r="0.9" fill="#7fd8ff"/>
    <path d="M15.2 20.5v5.5M19.8 20.5v8" stroke="#fff" stroke-width="0.9"/>
  </svg>
  <svg class="ico" style="left:811.5px;top:5.5px" width="37" height="37" viewBox="0 0 37 37">
    <defs><linearGradient id="gw" x1="0" y1="0" x2="0" y2="1"><stop offset="0" stop-color="#fff"/><stop offset="1" stop-color="#e8e8ea"/></linearGradient>
    <linearGradient id="gd1" x1="0" y1="0" x2="1" y2="0.6"><stop offset="0" stop-color="#9a6cf4"/><stop offset="0.7" stop-color="#7a86f8"/><stop offset="1" stop-color="#48b8ff"/></linearGradient>
    <clipPath id="cc"><circle cx="18.5" cy="18.5" r="18"/></clipPath>
    <clipPath id="wv"><path d="M8.4 15C14 9.5 26 8 37 12V37H10Z"/></clipPath></defs>
    <circle cx="18.5" cy="18.5" r="18" fill="url(#gw)"/>
    <g clip-path="url(#cc)"><g clip-path="url(#wv)">
      <rect width="37" height="37" fill="url(#gd1)"/>
      <circle cx="12.7" cy="24.2" r="19.5" fill="#6a6cf8"/>
      <circle cx="12.7" cy="24.2" r="17.5" fill="#4a6aff"/>
      <circle cx="12.7" cy="24.2" r="14.5" fill="#7a2cf6"/>
    </g></g>
    <circle cx="12.7" cy="24.2" r="9.8" fill="#f1f1f3"/>
  </svg>
  <div class="abs" style="left:820px;top:45px;width:20px;height:2px;background:#2a2a2a"></div>
  <svg class="ico" style="left:861px;top:7px" width="34" height="34" viewBox="0 0 34 34">
    <defs><linearGradient id="ge" x1="0" y1="0" x2="0" y2="1"><stop offset="0" stop-color="#ff9a30"/><stop offset="1" stop-color="#ff5210"/></linearGradient>
    <linearGradient id="gtop" x1="0" y1="0" x2="0" y2="1"><stop offset="0" stop-color="#fdf6ee"/><stop offset="1" stop-color="#f8dcc0"/></linearGradient>
    <clipPath id="bagc"><rect x="0.5" y="0.5" width="33" height="33" rx="5"/></clipPath></defs>
    <g clip-path="url(#bagc)">
      <rect width="34" height="34" fill="url(#ge)"/>
      <path d="M5 9v25M12.5 9v25M20 9v25M27.5 9v25" stroke="#ffb870" stroke-width="3.4" opacity="0.45"/>
      <rect width="34" height="9.5" fill="url(#gtop)"/>
    </g>
    <circle cx="7.5" cy="5" r="1.1" fill="none" stroke="#d8c8b8" stroke-width="0.7"/><circle cx="26.5" cy="5" r="1.1" fill="none" stroke="#d8c8b8" stroke-width="0.7"/>
    <path d="M7.5 6.2c0 6.5 4 10 9.5 10s9.5-3.5 9.5-10" stroke="#fff2e4" stroke-width="1.1" fill="none"/>
  </svg>
  <svg class="ico" style="left:908px;top:6.5px" width="36" height="35" viewBox="0 0 36 35">
    <defs><linearGradient id="gf" x1="0" y1="0" x2="0" y2="1"><stop offset="0" stop-color="#f7a020"/><stop offset="1" stop-color="#e06830"/></linearGradient>
    <linearGradient id="gm" x1="0" y1="0" x2="0.3" y2="1"><stop offset="0" stop-color="#ff4a28"/><stop offset="1" stop-color="#5a28c8"/></linearGradient>
    <linearGradient id="gm2" x1="0" y1="0" x2="0" y2="1"><stop offset="0" stop-color="#f09040"/><stop offset="1" stop-color="#6a3ad0"/></linearGradient>
    <clipPath id="phc"><path d="M3.5 7L31 3.6 33.4 24.2 6 27.6z"/></clipPath></defs>
    <path d="M1.5 5.5L31 2 35 30 5 33.5z" fill="#f4ece4" opacity="0.7" transform="rotate(3 18 18)"/>
    <path d="M1.5 5.5L31.5 1.8 35 29.5 4.8 33.2z" fill="#fbf3ea"/>
    <g clip-path="url(#phc)">
      <rect width="36" height="35" fill="url(#gf)"/>
      <path d="M5 28L15 13 23 22 34 28z" fill="url(#gm)"/>
      <path d="M14 28L22 17 34 27z" fill="url(#gm2)" opacity="0.75"/>
    </g>
    <circle cx="28.3" cy="7.6" r="1.6" fill="#ffe48a"/>
  </svg>
  <svg class="ico" style="left:956px;top:8px" width="36" height="33" viewBox="0 0 36 33">
    <defs><linearGradient id="gg" x1="0" y1="0" x2="0" y2="1"><stop offset="0" stop-color="#80f050"/><stop offset="1" stop-color="#10d8a8"/></linearGradient></defs>
    <circle cx="19" cy="16" r="15.5" fill="#1c2028" stroke="#30b060" stroke-width="0.8"/>
    <rect x="0.5" y="0.5" width="28.5" height="31.5" rx="4" fill="url(#gg)"/>
    <path d="M10 24V8.5l10.5-2V21" stroke="#d8f8e4" stroke-width="1.8" fill="none"/>
    <ellipse cx="7" cy="24" rx="3.3" ry="2.9" fill="#d8f8e4"/><ellipse cx="17.5" cy="21" rx="3.3" ry="2.9" fill="#d8f8e4"/>
  </svg>
  <svg class="ico" style="left:1003px;top:5.5px" width="36" height="37" viewBox="0 0 36 37">
    <defs><filter id="cs" x="-20%" y="-20%" width="140%" height="140%"><feDropShadow dx="0.5" dy="0.8" stdDeviation="0.7" flood-color="#000" flood-opacity="0.35"/></filter></defs>
    <g transform="rotate(-8.5 19 18.5)">
      <rect x="3.65" y="3.85" width="30.7" height="29.3" rx="4.5" fill="#fff" filter="url(#cs)"/>
      <text x="18.3" y="10.8" font-size="7" font-weight="bold" fill="#e8606a" font-family="Liberation Sans" text-anchor="middle" letter-spacing="0.2">MAR</text>
      <text x="19" y="24.5" font-size="14.5" fill="#1c2230" font-family="Liberation Sans" text-anchor="middle">29</text>
      <text x="18.8" y="30.2" font-size="4.6" fill="#333" font-family="Liberation Sans" text-anchor="middle">MON</text>
    </g>
  </svg>
  <svg class="ico" style="left:1052px;top:6px" width="36" height="36" viewBox="0 0 36 36">
    <defs><linearGradient id="gbl" x1="0" y1="0" x2="0" y2="1"><stop offset="0" stop-color="#3a4cf8"/><stop offset="1" stop-color="#3a14e0"/></linearGradient>
    <radialGradient id="ggr" cx="0.5" cy="0.4" r="0.6"><stop offset="0" stop-color="#f4f4fa"/><stop offset="1" stop-color="#b8bccc"/></radialGradient></defs>
    <circle cx="18" cy="18" r="16.6" fill="url(#gbl)"/>
    <g fill="#e6e8f2"><rect x="15.9" y="2.2" width="4.2" height="5" rx="0.8" transform="rotate(15 18 18)"/><rect x="15.9" y="2.2" width="4.2" height="5" rx="0.8" transform="rotate(45 18 18)"/><rect x="15.9" y="2.2" width="4.2" height="5" rx="0.8" transform="rotate(75 18 18)"/><rect x="15.9" y="2.2" width="4.2" height="5" rx="0.8" transform="rotate(105 18 18)"/><rect x="15.9" y="2.2" width="4.2" height="5" rx="0.8" transform="rotate(135 18 18)"/><rect x="15.9" y="2.2" width="4.2" height="5" rx="0.8" transform="rotate(165 18 18)"/><rect x="15.9" y="2.2" width="4.2" height="5" rx="0.8" transform="rotate(195 18 18)"/><rect x="15.9" y="2.2" width="4.2" height="5" rx="0.8" transform="rotate(225 18 18)"/><rect x="15.9" y="2.2" width="4.2" height="5" rx="0.8" transform="rotate(255 18 18)"/><rect x="15.9" y="2.2" width="4.2" height="5" rx="0.8" transform="rotate(285 18 18)"/><rect x="15.9" y="2.2" width="4.2" height="5" rx="0.8" transform="rotate(315 18 18)"/><rect x="15.9" y="2.2" width="4.2" height="5" rx="0.8" transform="rotate(345 18 18)"/></g>
    <circle cx="18" cy="18" r="12.6" fill="url(#ggr)"/>
    <ellipse cx="18" cy="12.3" rx="5.6" ry="3" fill="#1e2898"/>
    <ellipse cx="12.6" cy="21.3" rx="2.9" ry="5.2" transform="rotate(-35 12.6 21.3)" fill="#1e2898"/>
    <ellipse cx="23.4" cy="21.3" rx="2.9" ry="5.2" transform="rotate(35 23.4 21.3)" fill="#1e2898"/>
    <circle cx="18" cy="17.6" r="1" fill="#1e2898"/>
  </svg>
  <svg class="ico" style="left:1104px;top:6.5px" width="27" height="35" viewBox="0 0 27 35">
    <rect x="0.8" y="0.8" width="25.4" height="33.4" fill="#fff" stroke="#e6e6e6" stroke-width="1.6" stroke-dasharray="1.6 1.2"/>
    <svg x="1.7" y="1.8" width="23.6" height="31.4" viewBox="1.4 1 19.3 25.7" preserveAspectRatio="none"><use href="#appicon"/></svg>
  </svg>
  <div class="abs" style="left:1108px;top:45px;width:20px;height:2px;background:#44a8f0"></div>
  <!-- tray -->
  <div class="abs" style="left:1468px;top:10px;width:2px;height:28px;background:#2b2e36"></div>
  <div class="tray" style="left:1480px"></div>
  <svg class="ico" style="left:1487px;top:15px" width="14" height="18" viewBox="0 0 22 28"><rect x="0" y="0" width="22" height="28" fill="#fff" stroke="#ddd" stroke-dasharray="2 1.2" stroke-width="1.5"/><use href="#appicon"/></svg>
  <div class="tray" style="left:1518px"></div>
  <svg class="ico" style="left:1524px;top:18px" width="17" height="12" viewBox="0 0 17 12">
    <rect x="0" y="0" width="16.2" height="11.3" fill="#4a4a4e"/>
    <path d="M1.5 3.3h13.2" stroke="#f0f0f0" stroke-width="1.1" stroke-dasharray="1.2 0.8"/>
    <path d="M2 6.6h12.2" stroke="#d8d8d8" stroke-width="1.1" stroke-dasharray="1.6 0.9"/>
    <path d="M2.2 9.4h11.8" stroke="#f2f2f2" stroke-width="1.3"/>
  </svg>
  <div class="tray" style="left:1556px"></div>
  <svg class="ico" style="left:1560px;top:17px" width="20" height="14" viewBox="0 0 20 14">
    <path d="M0 4.5h4L10 0v14L4 9.5H0z" fill="#fff"/><path d="M12.5 3v8M16 1v12" stroke="#fff" stroke-width="1"/>
  </svg>
  <div class="tray" style="left:1594px"></div>
  <svg class="ico" style="left:1599px;top:15px" width="18" height="18" viewBox="0 0 18 18">
    <path d="M1 17L6.5 11.5M11.5 6.5L17 1" stroke="#fff" stroke-width="1.2"/><ellipse cx="9" cy="9" rx="5" ry="2.3" transform="rotate(-45 9 9)" fill="#fff"/>
  </svg>
  <div class="tray" style="left:1632px"></div>
  <svg class="ico" style="left:1643px;top:18px" width="7" height="12" viewBox="0 0 7 12" fill="none" stroke="#fff" stroke-width="1.1"><path d="M1 1l5 5-5 5"/></svg>
  <div class="abs" style="left:1671px;top:12px;width:2px;height:24px;background:#2b2e36"></div>
  <div class="tray" style="left:1682px"></div>
  <svg class="ico" style="left:1688px;top:18px" width="17" height="13" viewBox="0 0 17 13">
    <rect x="0" y="0" width="17" height="13" rx="2" fill="#f2f2f2"/>
    <rect x="3" y="3.5" width="11" height="6" fill="#333"/>
    <path d="M3 5.5h11M3 7.5h11" stroke="#999" stroke-width="0.5"/><path d="M4.5 3.5v6M6.3 3.5v6M8.1 3.5v6M9.9 3.5v6M11.7 3.5v6" stroke="#999" stroke-width="0.5"/>
  </svg>
  <div class="tray" style="left:1720px"></div>
  <svg class="ico" style="left:1724px;top:14px" width="20" height="20" viewBox="0 0 20 20">
    <circle cx="10" cy="10" r="10" fill="#fff"/><path d="M6.5 6.5a5 5 0 1 0 7 0" stroke="#474c57" stroke-width="1.3" fill="none"/><path d="M10 3.5v6" stroke="#474c57" stroke-width="1.3"/>
  </svg>
  <div class="abs" style="left:1761px;top:4px;font-size:21px;color:#111;line-height:24px">10:17</div>
  <div class="abs" style="left:1762px;top:27px;font-size:10.5px;color:#111;line-height:13px">2021/3/29</div>
  <svg class="ico" style="left:1827px;top:12.8px" width="22" height="23" viewBox="0 0 22 23">
    <defs><radialGradient id="gt" cx="0.5" cy="0.45" r="0.55"><stop offset="0" stop-color="#a8b0cc"/><stop offset="0.7" stop-color="#c8cee0"/><stop offset="1" stop-color="#f2f4fa"/></radialGradient></defs>
    <path d="M0 0.3h22l-3.3 21.4c-.1.6-.6 1-1.2 1H4.5c-.6 0-1.1-.4-1.2-1z" fill="url(#gt)"/>
    <path d="M0.4 0.8h21.2" stroke="#fff" stroke-width="1.2"/>
    <circle cx="11.5" cy="10.7" r="4" fill="none" stroke="#5a6890" stroke-width="1.9" stroke-dasharray="4.5 1.8"/>
  </svg>
  <div class="tray" style="left:1862px"></div>
  <svg class="ico" style="left:1867px;top:15px" width="18" height="19" viewBox="0 0 18 19">
    <path d="M9 1c-3.5 0-5.5 2.5-5.5 6v4.5L1 14.5h16l-2.5-3V7c0-3.5-2-6-5.5-6z" fill="#fff"/><path d="M6.5 16.5h5c-.3 1.5-1.3 2.3-2.5 2.3s-2.2-.8-2.5-2.3z" fill="#fff"/>
  </svg>
</div>
</body></html>
